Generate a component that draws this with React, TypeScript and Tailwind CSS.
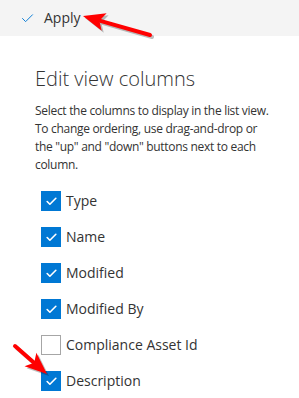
import { Check } from 'lucide-react';

const COLUMNS = [
  { name: 'Type', checked: true },
  { name: 'Name', checked: true },
  { name: 'Modified', checked: true },
  { name: 'Modified By', checked: true },
  { name: 'Compliance Asset Id', checked: false },
  { name: 'Description', checked: true },
];

// ── Red callout arrow ─────────────────────────────────────────────────────
function Arrow({ x1, y1, x2, y2 }: { x1: number; y1: number; x2: number; y2: number }) {
  const dx = x2 - x1;
  const dy = y2 - y1;
  const len = Math.hypot(dx, dy);
  const ux = dx / len;
  const uy = dy / len;
  const headLen = 22;
  const headW = 9;
  const bx = x2 - ux * headLen;
  const by = y2 - uy * headLen;
  const px = -uy;
  const py = ux;
  const head = `${x2},${y2} ${bx + px * headW},${by + py * headW} ${bx + ux * 5},${by + uy * 5} ${bx - px * headW},${by - py * headW}`;
  return (
    <g>
      <g transform="translate(2,2)" opacity={0.25}>
        <line x1={x1} y1={y1} x2={bx + ux * 4} y2={by + uy * 4} stroke="#000" strokeWidth={4} strokeLinecap="round" />
        <polygon points={head} fill="#000" />
      </g>
      <line x1={x1} y1={y1} x2={bx + ux * 4} y2={by + uy * 4} stroke="#f00" strokeWidth={4} strokeLinecap="round" />
      <polygon points={head} fill="#f00" />
    </g>
  );
}

function Checkbox({ checked }: { checked: boolean }) {
  if (checked) {
    return (
      <div className="w-5 h-5 bg-[#0078d4] flex items-center justify-center shrink-0">
        <Check className="w-[13px] h-[13px] text-white" strokeWidth={3} />
      </div>
    );
  }
  return <div className="w-5 h-5 border border-[#a6a6a6] bg-white shrink-0" />;
}

export default function App() {
  return (
    <div className="relative w-[299px] h-[398px] bg-white overflow-hidden text-[#333]" style={{ fontFamily: '"Open Sans", "Noto Sans", sans-serif' }}>
      {/* Command bar */}
      <div className="h-[36px] bg-[#f4f4f4] flex items-center pl-[20px]">
        <Check className="w-[15px] h-[15px] text-[#0078d4]" strokeWidth={1.5} />
        <span className="ml-[9px] text-[14px] leading-none text-[#333]">Apply</span>
      </div>

      <div className="pl-[35px]">
        <h2 className="mt-[29px] text-[20px] leading-[28px] font-light text-[#333]">Edit view columns</h2>
        <p className="mt-[9px] w-[242px] text-[12px] leading-[18px] text-[#333] tracking-[-0.3px]">
          Select the columns to display in the list view. To change ordering, use drag-and-drop or the "up" and "down" buttons next to each column.
        </p>

        <div className="mt-[17px] pl-[6px] flex flex-col gap-4">
          {COLUMNS.map((c) => (
            <div key={c.name} className="flex items-center gap-[5px] h-5">
              <Checkbox checked={c.checked} />
              <span className="text-[14px] leading-5 text-[#333]">{c.name}</span>
            </div>
          ))}
        </div>
      </div>

      {/* Callouts */}
      <svg className="absolute inset-0 pointer-events-none" width={299} height={398}>
        <Arrow x1={150} y1={35} x2={83} y2={16} />
        <Arrow x1={15} y1={346} x2={47} y2={374} />
      </svg>
    </div>
  );
}
